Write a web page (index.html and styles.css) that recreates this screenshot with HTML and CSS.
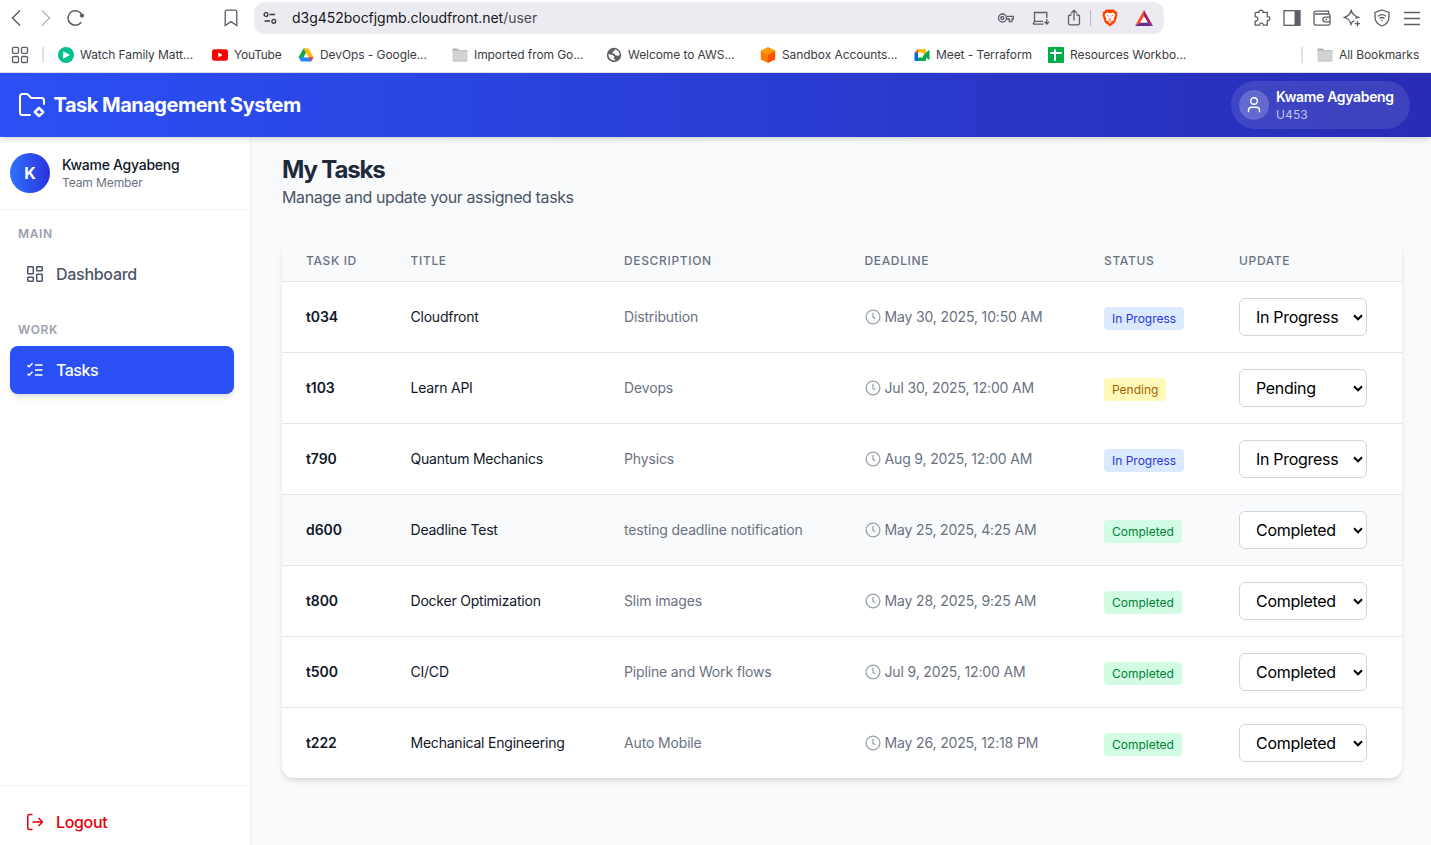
FILE: index.html
```html
<!DOCTYPE html>
<html lang="en">
<head>
<meta charset="utf-8">
<title>Task Management System</title>
<link rel="stylesheet" href="styles.css">
</head>
<body>
<svg class="defs" aria-hidden="true">
  <symbol id="clock" viewBox="0 0 16 16"><circle cx="8" cy="8" r="6.900"/><path d="M8 3.800V8.300L10.300 9.800"/></symbol>
  <symbol id="chev" viewBox="0 0 10 7"><path d="M1 1.300L5 5.300L9 1.300"/></symbol>
  <symbol id="folder" viewBox="0 0 16 16"><path d="M.5 2.500Q.5 1.500 1.500 1.500H5.500L7 3H14.500Q15.500 3 15.500 4V5H.5Z" fill="#b0b0b0"/><rect x=".5" y="3.600" width="15" height="10.600" rx="1" fill="#d2d2d2"/><path d="M1 14H15" stroke="#b5b5b5" stroke-width=".8"/></symbol>
</svg>

<div class="browser">
  <div class="toolbar">
    <svg class="nav-back" width="10" height="18" viewBox="0 0 10 18"><path d="M9 1.500L1.500 9L9 16.500"/></svg>
    <svg class="nav-fwd" width="10" height="18" viewBox="0 0 10 18"><path d="M1 1.500L8.500 9L1 16.500"/></svg>
    <svg class="reload" width="18" height="18" viewBox="0 0 18 18"><path d="M14.200 13.300A7.300 7.300 0 1 1 15.200 6.500"/><circle class="solid" cx="15" cy="6.600" r="2.100"/></svg>
    <svg class="mark" width="14" height="18" viewBox="0 0 14 18"><path d="M1.200 2.800Q1.200 1.200 2.800 1.200H11.200Q12.800 1.200 12.800 2.800V16.500L7 12.600L1.200 16.500Z"/></svg>
    <div class="address">
      <svg class="dark" width="14" height="14" viewBox="0 0 14 14"><circle cx="3" cy="3.500" r="1.900"/><path d="M6.500 3.500H12M1.500 10H7"/><circle cx="10.800" cy="10.300" r="1.900"/></svg>
      <span class="url">d3g452bocfjgmb.cloudfront.net<span class="path">/user</span></span>
      <svg class="key" width="16" height="12" viewBox="0 0 16 12"><circle cx="4.500" cy="6" r="4"/><circle cx="4.300" cy="6" r="1.500"/><path d="M8.300 4.400H15.500V7H14V9.700H11.300V7H8.400"/></svg>
      <svg class="install" width="18" height="16" viewBox="0 0 18 16"><path d="M11 11.300H2.500V2.500H14.800V8M1 14.200H11.500M14.800 9V14M12.600 11.800L14.800 14L17 11.800M2.500 11.300L1 14.200"/></svg>
      <svg class="share" width="14" height="18" viewBox="0 0 14 18"><path d="M4.500 6H3Q1.500 6 1.500 7.500V14Q1.500 15.800 3 15.800H11Q12.500 15.800 12.500 14V7.500Q12.500 6 11 6H9.500M7 11.500V1.500M4 4.300L7 1.300L10 4.300"/></svg>
      <i class="address-sep"></i>
      <svg class="brave" width="16" height="18" viewBox="0 0 16 18"><path fill="#ff4000" d="M4.300.5H11.700L13.200 2.100L15.300 3L14.900 5L15.500 6L13.300 13.200L8 17.400L2.700 13.200L.5 6L1.100 5L.7 3L2.800 2.100Z"/><path fill="#fff" d="M4.500 3.500L8 4.200L11.500 3.500L13.400 6L11.700 9.500L12.200 11.200L9.700 12.300L8 14.800L6.300 12.300L3.800 11.200L4.300 9.500L2.600 6Z"/><path fill="none" stroke="#ff4000" stroke-width=".9" d="M5 6.500L6.500 7M11 6.500L9.500 7M6.700 9.500L8 10.300L9.300 9.500M6.500 12.200L8 11.500L9.500 12.200"/></svg>
      <svg class="bat" width="18" height="16" viewBox="0 0 18 16"><path fill="#ff4724" d="M9 0L0 16L5.300 12.600L9 6.200Z"/><path fill="#9e1f63" d="M9 0L18 16L12.700 12.600L9 6.200Z"/><path fill="#662d91" d="M0 16H18L12.700 12.600H5.300Z"/><path fill="#fff" d="M9 6.200L12.700 12.600H5.300Z"/></svg>
    </div>
    <div class="tools">
      <svg width="18" height="18" viewBox="0 0 18 18"><path d="M3.200 3.300H6C5.500.4 10.500.4 10 3.300H14.300V7.600C17.800 7 17.800 12 14.300 11.500V16.200H10.300C10.500 13.400 6.300 13.400 6.500 16.200H2.200V12.200C5.600 12.300 5.600 7.500 2.200 7.600V4.300Q2.200 3.300 3.200 3.300Z"/></svg>
      <svg width="18" height="18" viewBox="0 0 18 18"><rect x="1" y="1.700" width="16" height="14.600"/><path class="solid" d="M11.500 1.700H17V16.300H11.500Z"/></svg>
      <svg width="18" height="18" viewBox="0 0 18 18"><path d="M15.500 5V2.200H3.200Q1 2.200 1 4.200V14Q1 16.200 3.200 16.200H15.200Q17 16.200 17 14.400V6.800Q17 5 15.200 5H2M17 8.200H12.300Q9.800 8.200 9.800 10.500T12.300 12.800H17M12.500 10.500H14"/></svg>
      <svg width="18" height="18" viewBox="0 0 18 18"><path d="M11.500 11.500Q9 12.500 8 15.300C7 11 5.500 9.500 1.300 8.300C5.500 7.200 7.200 5.700 8.200 1.500C9.500 5.500 11 7 15.300 8.300Q13.500 8.800 12.500 9.500M14.500 12V17.200M11.900 14.600H17.100"/></svg>
      <svg width="18" height="18" viewBox="0 0 18 18"><path d="M9 1L16 3.500V8C16 12.500 13 15.500 9 17C5 15.500 2 12.500 2 8V3.500ZM5 7.200Q9 4.200 13 7.200M6.500 9.500Q9 7.500 11.500 9.500"/><circle class="solid" cx="9" cy="11.600" r=".8"/></svg>
      <svg width="18" height="18" viewBox="0 0 18 18"><path d="M1 3.500H17M1 9.500H17M1 15.500H17"/></svg>
    </div>
  </div>
  <div class="bookmarks">
    <svg class="apps" width="18" height="18" viewBox="0 0 18 18"><rect x="1.500" y="1.300" width="6" height="6" rx="1.200"/><rect x="10.500" y="1.300" width="6" height="6" rx="1.200"/><rect x="1.500" y="10.500" width="6" height="6" rx="1.200"/><rect x="10.500" y="10.500" width="6" height="6" rx="1.200"/></svg>
    <i class="bar-sep"></i>
    <a class="bm"><svg width="16" height="16" viewBox="0 0 16 16"><circle cx="8" cy="8" r="8" fill="#00bf91"/><path d="M5.200 4.300L12 8L5.200 11.700Z" fill="#fff"/></svg><span>Watch Family Matt...</span></a>
    <a class="bm short"><svg width="16" height="16" viewBox="0 0 16 16"><rect y="2.300" width="16" height="11.400" rx="2.600" fill="#f00"/><path d="M6.300 5.500L10.600 8L6.300 10.500Z" fill="#fff"/></svg><span>YouTube</span></a>
    <a class="bm"><svg width="16" height="16" viewBox="0 0 16 16"><path fill="#10a84f" d="M5.500 1.500H8L9.500 4L3.500 14.500L.7 10Z"/><path fill="#ffba00" d="M5.500 1.500H10.500L15.500 10.200H10.500Z"/><path fill="#2684fc" d="M.7 10.200H15.500L13 14.500H3.200Z"/><path fill="#ea4335" d="M10.600 10.200H15.500L13 14.500Z"/><path fill="#fff" d="M8 5.800L10.500 10.200H5.500Z"/></svg><span>DevOps - Google...</span></a>
    <a class="bm"><svg width="16" height="16"><use href="#folder"/></svg><span>Imported from Go...</span></a>
    <a class="bm"><svg width="16" height="16" viewBox="0 0 16 16"><circle cx="8" cy="8" r="7.200" fill="#5f6368"/><path fill="#fff" d="M8.500 2.200Q12 2.500 13.500 6.500V8.200L11 8.700L8.800 8V6.700L6.300 6.200L7 4.400L8.800 3.800ZM2.200 7.300L6 7.700L8.600 9.800L7.600 11L9.500 13.500Q3.200 14 2.200 7.300Z"/></svg><span>Welcome to AWS...</span></a>
    <a class="bm"><svg width="16" height="16" viewBox="0 0 16 16"><path fill="#ff9900" d="M8 0L15.200 3.500L8 7.400L.8 3.500Z"/><path fill="#ff7a00" d="M.8 3.500L8 7.400V16L.8 12.500Z"/><path fill="#ff5200" d="M15.200 3.500L8 7.400V16L15.200 12.500Z"/></svg><span>Sandbox Accounts...</span></a>
    <a class="bm mid"><svg width="16" height="16" viewBox="0 0 16 16"><path fill="#0066da" d="M.5 5.500H4V14H1.700Q.5 14 .5 12.800Z"/><path fill="#e94235" d="M4 2V5.500H.5Z"/><path fill="#ffba00" d="M4 2H11Q12 2 12 3V8L9 7V5.500H4Z"/><path fill="#00ac47" d="M4 10.500H9V9L14.500 3.300Q15.500 2.800 15.500 4V12Q15.500 13.100 14.500 12.500L12 10.500V13Q12 14 11 14H4Z"/></svg><span>Meet - Terraform</span></a>
    <a class="bm"><svg width="16" height="16" viewBox="0 0 16 16"><rect width="16" height="16" rx="1" fill="#00ac47"/><path d="M2.300 6H13.700M7 2.500V13.800" stroke="#fff" stroke-width="2"/></svg><span>Resources Workbo...</span></a>
    <i class="bar-sep end"></i>
    <a class="bm all"><svg width="16" height="16"><use href="#folder"/></svg><span>All Bookmarks</span></a>
  </div>
</div>

<header class="app-header">
  <svg class="logo" width="32" height="32" viewBox="0 0 32 32"><path d="M14 26H6.500Q4 26 4 23.500V7.500Q4 5 6.500 5H10.500Q11.300 5 12 5.600L15.300 9H25.500Q28 9 28 11.500V15"/><path class="gem" d="M23 18.900L27.100 23L23 27.100L18.900 23Z"/></svg>
  <h1>Task Management System</h1>
  <div class="user-pill">
    <div class="user-icon"><svg width="16" height="16" viewBox="0 0 16 16"><circle cx="8" cy="4" r="3.300"/><path d="M2.500 15.300V13.500Q2.500 10.300 5.700 10.300H10.300Q13.500 10.300 13.500 13.500V15.300"/></svg></div>
    <div><div class="user-name">Kwame Agyabeng</div><div class="user-id">U453</div></div>
  </div>
</header>

<div class="app">
  <aside class="sidebar">
    <div class="profile">
      <div class="avatar">K</div>
      <div><div class="profile-name">Kwame Agyabeng</div><div class="profile-role">Team Member</div></div>
    </div>
    <nav>
      <div class="label">MAIN</div>
      <a class="item"><svg width="18" height="18" viewBox="0 0 18 18"><rect x="1.800" y="1.800" width="5.500" height="7" rx=".6"/><rect x="10.700" y="1.800" width="5.500" height="4" rx=".6"/><rect x="1.800" y="12.200" width="5.500" height="4" rx=".6"/><rect x="10.700" y="9.200" width="5.500" height="7" rx=".6"/></svg><span>Dashboard</span></a>
      <div class="label second">WORK</div>
      <a class="item active"><svg width="18" height="18" viewBox="0 0 18 18"><path d="M9 4H16.500M9 9H16.500M9 14H16.500M1.500 4.300L3 5.800L6.500 2.300M1.500 12.800L3 14.300L6.500 10.800"/></svg><span>Tasks</span></a>
    </nav>
    <div class="logout"><svg width="18" height="18" viewBox="0 0 18 18"><path d="M6.500 1.500H3.300Q1.800 1.500 1.800 3V15Q1.800 16.500 3.300 16.500H6.500M6.500 9H16.300M12.500 5L16.500 9L12.500 13"/></svg><span>Logout</span></div>
  </aside>

  <main>
    <h2>My Tasks</h2>
    <p class="subtitle">Manage and update your assigned tasks</p>
    <section class="table">
      <div class="row head"><span>TASK ID</span><span>TITLE</span><span>DESCRIPTION</span><span>DEADLINE</span><span>STATUS</span><span>UPDATE</span></div>
      <div class="row"><b>t034</b><span class="title">Cloudfront</span><span>Distribution</span><span class="date"><svg><use href="#clock"/></svg><span>May 30, 2025, 10:50 AM</span></span><span><em class="badge progress">In Progress</em></span><div class="pick"><select><option>In Progress</option></select><svg><use href="#chev"/></svg></div></div>
      <div class="row"><b>t103</b><span class="title">Learn API</span><span>Devops</span><span class="date"><svg><use href="#clock"/></svg><span>Jul 30, 2025, 12:00 AM</span></span><span><em class="badge pending">Pending</em></span><div class="pick"><select><option>Pending</option></select><svg><use href="#chev"/></svg></div></div>
      <div class="row"><b>t790</b><span class="title">Quantum Mechanics</span><span>Physics</span><span class="date"><svg><use href="#clock"/></svg><span>Aug 9, 2025, 12:00 AM</span></span><span><em class="badge progress">In Progress</em></span><div class="pick"><select><option>In Progress</option></select><svg><use href="#chev"/></svg></div></div>
      <div class="row hover"><b>d600</b><span class="title">Deadline Test</span><span>testing deadline notification</span><span class="date"><svg><use href="#clock"/></svg><span>May 25, 2025, 4:25 AM</span></span><span><em class="badge done">Completed</em></span><div class="pick"><select><option>Completed</option></select><svg><use href="#chev"/></svg></div></div>
      <div class="row"><b>t800</b><span class="title">Docker Optimization</span><span>Slim images</span><span class="date"><svg><use href="#clock"/></svg><span>May 28, 2025, 9:25 AM</span></span><span><em class="badge done">Completed</em></span><div class="pick"><select><option>Completed</option></select><svg><use href="#chev"/></svg></div></div>
      <div class="row"><b>t500</b><span class="title">CI/CD</span><span>Pipline and Work flows</span><span class="date"><svg><use href="#clock"/></svg><span>Jul 9, 2025, 12:00 AM</span></span><span><em class="badge done">Completed</em></span><div class="pick"><select><option>Completed</option></select><svg><use href="#chev"/></svg></div></div>
      <div class="row"><b>t222</b><span class="title">Mechanical Engineering</span><span>Auto Mobile</span><span class="date"><svg><use href="#clock"/></svg><span>May 26, 2025, 12:18 PM</span></span><span><em class="badge done">Completed</em></span><div class="pick"><select><option>Completed</option></select><svg><use href="#chev"/></svg></div></div>
    </section>
  </main>
</div>
</body>
</html>
```
FILE: styles.css
```css
* { box-sizing: border-box; }
body { margin: 0; height: 845px; overflow: hidden; display: flex; flex-direction: column; font-family: Inter, "Liberation Sans", sans-serif; color: #101828; background: #fff; }
svg { fill: none; flex: none; display: block; }
h1, h2, p { margin: 0; }
.defs { display: none; }

/* Browser chrome */
.browser { height: 73px; flex: none; background: #fff; border-bottom: 1px solid #dfdfe8; }
.toolbar { height: 36px; display: flex; align-items: center; }
.toolbar svg { stroke: #5b5e66; stroke-width: 1.3; }
.toolbar .solid { fill: #5b5e66; stroke: none; }
.toolbar .nav-back { margin-left: 11px; stroke-width: 1.5; }
.toolbar .nav-fwd { margin-left: 20px; stroke: #b9bbc0; stroke-width: 1.5; }
.toolbar .reload { margin-left: 16px; stroke-width: 1.5; }
.toolbar .mark { margin-left: 139px; }
.address { margin-left: 16px; width: 910px; height: 32px; border-radius: 10px; background: #ecebf2; display: flex; align-items: center; padding-left: 9px; }
.toolbar .dark { stroke: #33353b; }
.url { margin-left: 15px; padding-bottom: 2px; font-size: 14px; letter-spacing: -.03px; color: #17181c; width: 705px; }
.path { color: #4b4d54; }
.toolbar .key { margin-left: 1px; }
.toolbar .install { margin-left: 18px; }
.toolbar .share { margin-left: 17px; }
.address-sep { width: 1px; height: 16px; margin-left: 9px; background: #b8b8c0; }
.toolbar .brave { margin-left: 11px; stroke: none; }
.toolbar .bat { margin-left: 17px; stroke: none; }
.tools { display: flex; gap: 12px; margin-left: 89px; }
.bookmarks { height: 36px; display: flex; align-items: center; padding-top: 2px; font-size: 12px; letter-spacing: -.08px; color: #3b3d43; }
.apps { margin-left: 11px; stroke: #5b5e66; stroke-width: 1.3; }
.bar-sep { width: 2px; height: 16px; background: #e1e1e9; margin: 0 14px 0 13px; }
.bm { display: flex; align-items: center; gap: 6px; width: 154px; flex: none; white-space: nowrap; }
.bm span { padding-bottom: 2px; }
.bm.short { width: 86px; letter-spacing: -.25px; }
.bm.mid { width: 134px; }
.bar-sep.end { margin: 0 14px 0 99px; }
.bm.all { width: auto; }

/* Application header */
.app-header { height: 64px; flex: none; display: flex; align-items: center; padding: 0 21px 0 16px; color: #fff; background: linear-gradient(90deg, #2b50f5, #282cb5); box-shadow: 0 4px 6px -1px rgba(0,0,0,.1), 0 2px 4px -2px rgba(0,0,0,.1); z-index: 1; }
.logo { stroke: #fff; stroke-width: 2; stroke-linejoin: round; stroke-linecap: round; }
.gem { stroke-width: 2.6; }
h1 { margin-left: 5.500px; font-size: 20px; line-height: 28px; font-weight: 700; letter-spacing: -.5px; }
.user-pill { margin-left: auto; width: 179px; height: 48px; border-radius: 24px; background: rgba(255,255,255,.1); padding-left: 8px; display: flex; align-items: center; gap: 7px; white-space: nowrap; }
.user-icon { width: 30px; height: 30px; border-radius: 50%; background: rgba(255,255,255,.2); display: grid; place-items: center; }
.user-icon svg { stroke: #fff; stroke-width: 1.4; }
.user-name { font-size: 14px; line-height: 18px; font-weight: 600; letter-spacing: -.33px; }
.user-id { font-size: 12px; line-height: 16px; color: #bfc3ea; padding-top: 1px; margin-bottom: -1px; letter-spacing: .1px; }

/* Sidebar */
.app { flex: 1; min-height: 0; display: flex; }
.sidebar { width: 250px; flex: none; display: flex; flex-direction: column; background: #fff; box-shadow: 0 1px 3px rgba(0,0,0,.1); z-index: 0; }
.profile { height: 73px; border-bottom: 1px solid #f0f1f4; display: flex; align-items: center; gap: 12px; padding-left: 10px; white-space: nowrap; }
.avatar { width: 40px; height: 40px; border-radius: 50%; background: linear-gradient(90deg, #2f72fb, #2b31de); color: #fff; font-size: 16px; font-weight: 700; display: grid; place-items: center; }
.profile-name { font-size: 14px; line-height: 18px; font-weight: 500; letter-spacing: -.27px; }
.profile-role { font-size: 12px; line-height: 16px; color: #6a7282; padding-top: 1px; margin-bottom: -1px; letter-spacing: -.1px; }
nav { flex: 1; padding: 16px 16px 0 10px; }
.label { padding-left: 8px; font-size: 12px; line-height: 16px; font-weight: 600; letter-spacing: .6px; color: #99a1af; }
.label.second { margin-top: 24px; }
.item { height: 48px; margin-top: 8px; border-radius: 8px; display: flex; align-items: center; gap: 12px; padding-left: 16px; font-size: 16px; font-weight: 500; letter-spacing: -.28px; color: #4a5565; }
.item svg, .logout svg { stroke: currentColor; stroke-width: 1.5; }
.item.active { background: #2b50f5; color: #fff; letter-spacing: -.5px; box-shadow: 0 4px 6px -1px rgba(0,0,0,.1), 0 2px 4px -2px rgba(0,0,0,.1); }
.logout { height: 60px; border-top: 1px solid #f0f1f4; padding: 12px 0 0 26px; display: flex; align-items: center; gap: 12px; color: #e7000b; font-size: 16px; font-weight: 500; letter-spacing: -.35px; }

/* Main content */
main { flex: 1; background: #f9fafb; padding: 17px 29px 0 32px; }
h2 { font-size: 24px; line-height: 32px; font-weight: 700; letter-spacing: -1.15px; color: #1e2939; }
.subtitle { font-size: 16px; line-height: 24px; margin-top: -1px; color: #4a5565; letter-spacing: -.39px; }
.table { margin-top: 32px; border-radius: 12px; overflow: hidden; background: #fff; box-shadow: 0 4px 6px -1px rgba(0,0,0,.1), 0 2px 4px -2px rgba(0,0,0,.1); }
.row { height: 71px; display: grid; grid-template-columns: 104.5px 213.5px 240.500px 239.500px 135px 1fr; align-items: center; border-bottom: 1px solid #e5e7eb; font-size: 14px; letter-spacing: -.15px; color: #6a7282; white-space: nowrap; }
.row > * { padding-left: 24px; }
.row > .title, .row > b, .row > .title + span, .date span, .head span { padding-bottom: 2px; }
.row:last-child { height: 70px; border-bottom: 0; }
.row.head { height: 41px; background: #f9fafb; font-size: 12px; font-weight: 500; letter-spacing: .65px; }
.row.hover { background: #f9fafb; }
.row b { font-weight: 600; color: #101828; letter-spacing: -.1px; }
.title { color: #101828; letter-spacing: -.22px; }
.date { display: flex; align-items: center; gap: 4px; }
.date svg { width: 16px; height: 16px; stroke: #99a1af; stroke-width: 1.3; }
.badge { display: inline-block; margin-top: 3px; height: 23px; border-radius: 4px; padding: 0 8px; font-style: normal; font-size: 12px; line-height: 23px; letter-spacing: 0; vertical-align: middle; }
.progress { background: #dbeafe; color: #2a36dc; }
.pending { background: #fef9b8; color: #a65f00; }
.done { background: #d2fce3; color: #008236; }
.pick { position: relative; width: 152px; }
.pick select { display: block; width: 128px; height: 38px; appearance: none; border: 1px solid #d1d5dc; border-radius: 6px; background: #fff; padding: 0 16px; font-family: inherit; font-size: 16px; letter-spacing: -.3px; color: #000; }
.pick svg { position: absolute; right: 4px; top: 16px; width: 10px; height: 7px; stroke: #000; stroke-width: 2; pointer-events: none; }
```
